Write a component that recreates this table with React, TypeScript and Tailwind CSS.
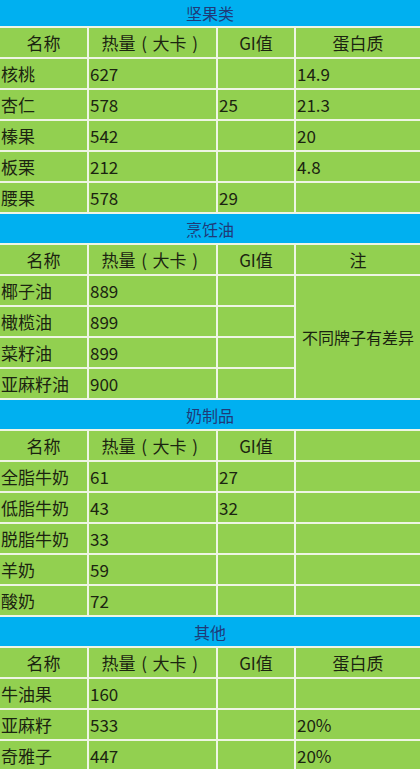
import React from 'react';

type Section = {
  title: string;
  headers: string[];
  rows: string[][];
  note?: string;
};

const KCAL = '热量（大卡）';

const SECTIONS: Section[] = [
  {
    title: '坚果类',
    headers: ['名称', KCAL, 'GI值', '蛋白质'],
    rows: [
      ['核桃', '627', '', '14.9'],
      ['杏仁', '578', '25', '21.3'],
      ['榛果', '542', '', '20'],
      ['板栗', '212', '', '4.8'],
      ['腰果', '578', '29', ''],
    ],
  },
  {
    title: '烹饪油',
    headers: ['名称', KCAL, 'GI值', '注'],
    rows: [
      ['椰子油', '889', ''],
      ['橄榄油', '899', ''],
      ['菜籽油', '899', ''],
      ['亚麻籽油', '900', ''],
    ],
    note: '不同牌子有差异',
  },
  {
    title: '奶制品',
    headers: ['名称', KCAL, 'GI值', ''],
    rows: [
      ['全脂牛奶', '61', '27', ''],
      ['低脂牛奶', '43', '32', ''],
      ['脱脂牛奶', '33', '', ''],
      ['羊奶', '59', '', ''],
      ['酸奶', '72', '', ''],
    ],
  },
  {
    title: '其他',
    headers: ['名称', KCAL, 'GI值', '蛋白质'],
    rows: [
      ['牛油果', '160', '', ''],
      ['亚麻籽', '533', '', '20%'],
      ['奇雅子', '447', '', '20%'],
    ],
  },
];

const cell = 'bg-[#92d050] h-[29px] flex items-center text-[#1b2410] text-[17px] leading-none';

// full-width brackets drawn centred in their em box, like the original sheet font
function HeaderText({ text }: { text: string }) {
  if (text !== KCAL) return <>{text}</>;
  return (
    <span className="flex items-center">
      热量
      <span className="inline-block w-[17px] text-center">(</span>
      大卡
      <span className="inline-block w-[17px] text-center">)</span>
    </span>
  );
}

export default function App() {
  return (
    <div
      className="w-[420px] h-[769px] overflow-hidden bg-white"
      style={{ fontFamily: '"Noto Sans CJK SC", "Noto Sans", sans-serif' }}
    >
      <div className="grid grid-cols-[87px_127px_76px_124px] gap-[2px] bg-[#eef5e4]">
        {SECTIONS.map((s, si) => (
          <React.Fragment key={s.title}>
            {/* section title bar */}
            <div
              className={`col-span-4 bg-[#00b0f0] flex items-center justify-center text-[16px] text-[#1f3a78] ${
                si === 0 ? 'h-[26px]' : 'h-[29px]'
              }`}
            >
              {s.title}
            </div>

            {/* column headers */}
            {s.headers.map((h, i) => (
              <div key={i} className={`${cell} justify-center text-[16px]`}>
                <HeaderText text={h} />
              </div>
            ))}

            {/* data rows */}
            {s.rows.map((r, ri) => (
              <React.Fragment key={ri}>
                {r.map((v, ci) => (
                  <div key={ci} className={`${cell} pl-[1px]`}>
                    {v}
                  </div>
                ))}
                {s.note && ri === 0 && (
                  <div className="row-span-4 bg-[#92d050] flex items-center justify-center text-[#1b2410] text-[16px]">
                    {s.note}
                  </div>
                )}
              </React.Fragment>
            ))}
          </React.Fragment>
        ))}
      </div>
    </div>
  );
}
